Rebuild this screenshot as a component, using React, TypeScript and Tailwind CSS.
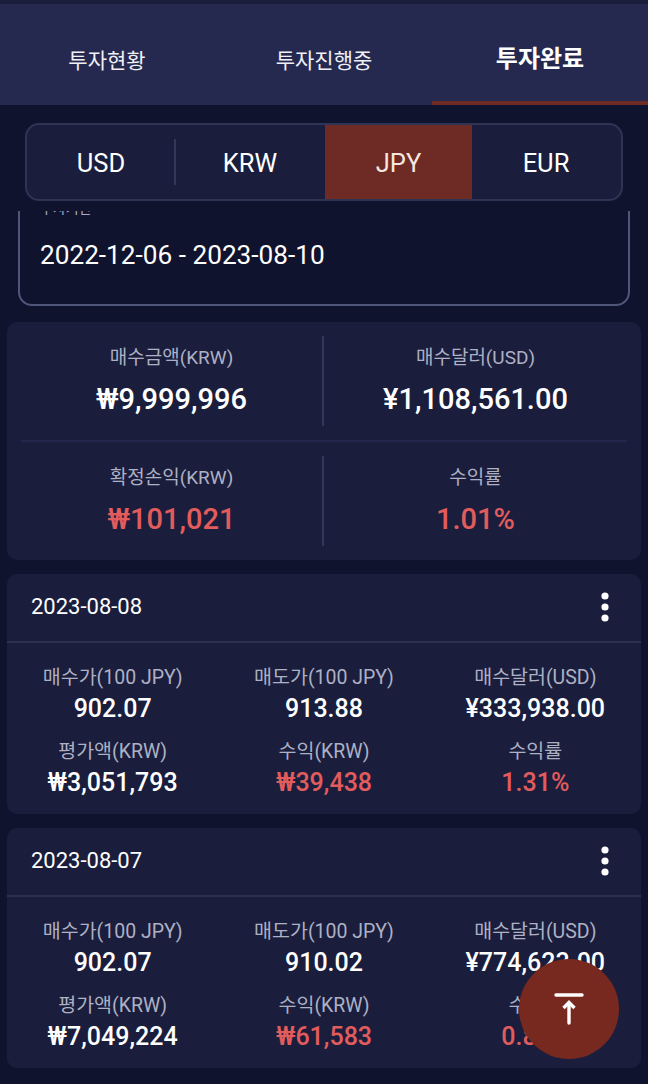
const Font = "font-['Roboto','Noto_Sans_CJK_KR',sans-serif]";

const Stat = ({ label, value, red }: { label: string; value: string; red?: boolean }) => (
  <div className="flex flex-col items-center pb-[1px]">
    <div className="text-[19px] leading-[26px] text-[#aeb0c4]">{label}</div>
    <div className={`mt-[11px] text-[29px] leading-[34px] font-medium ${red ? "text-[#e25c5c]" : "text-white"}`}>
      {value}
    </div>
  </div>
);

const Cell = ({ label, value, red }: { label: string; value: string; red?: boolean }) => (
  <div className="flex flex-col items-center">
    <div className="text-[19.5px] leading-[26px] text-[#aeb0c4]">{label}</div>
    <div className={`mt-[3px] text-[25px] leading-[30px] font-medium ${red ? "text-[#e25c5c]" : "text-white"}`}>
      {value}
    </div>
  </div>
);

const DealCard = ({ date, items }: { date: string; items: { label: string; value: string; red?: boolean }[] }) => (
  <section className="mx-[7px] h-[240px] rounded-[10px] bg-[#1a1e3c]">
    <div className="flex h-[69px] items-center justify-between border-b-2 border-[#2d3150] pb-[2px] pl-[24px] pr-[30px]">
      <span className="text-[22px] text-white">{date}</span>
      <svg width="12" height="30" viewBox="0 0 12 30" fill="white" aria-hidden="true">
        <circle cx="6" cy="4" r="3.6" />
        <circle cx="6" cy="15" r="3.6" />
        <circle cx="6" cy="26" r="3.6" />
      </svg>
    </div>
    <div className="grid grid-cols-3 gap-y-[15px] pt-[22px]">
      {items.map((item) => (
        <Cell key={item.label} {...item} />
      ))}
    </div>
  </section>
);

const currencies = ["USD", "KRW", "JPY", "EUR"];

export default function App() {
  return (
    <main className={`${Font} relative h-[1084px] w-[648px] overflow-hidden bg-[#10132e]`}>
      {/* Tabs */}
      <div className="h-[4px] bg-[#1a1d3a]" />
      <nav className="grid h-[101px] grid-cols-3 bg-[#26294f] text-white">
        <div className="flex items-center justify-center pr-[2px] pt-[15px] text-[21px] text-[#f0f0f5]">투자현황</div>
        <div className="flex items-center justify-center pt-[15px] text-[21px] text-[#f0f0f5]">투자진행중</div>
        <div className="flex items-center justify-center border-b-[4px] border-[#6e2a24] pt-[13px] text-[24px] font-bold">
          투자완료
        </div>
      </nav>

      {/* Currency filter */}
      <div className="mx-[25px] mt-[18px] grid h-[78px] grid-cols-[148px_150px_147px_148px] overflow-hidden rounded-[14px] border-2 border-[#2f3354] bg-[#1a1e3c]">
        {currencies.map((c, i) => (
          <div
            key={c}
            className={`relative flex items-center justify-center pt-[2px] text-[25.5px] ${
              c === "JPY" ? "bg-[#6e2a24] text-[#f6e6e0]" : "text-white"
            }`}
          >
            {c}
            {i === 0 && <span className="absolute -right-[1px] top-[14px] h-[46px] w-[2px] bg-[#33375a]" />}
          </div>
        ))}
      </div>

      {/* Date range, scrolled under the filter */}
      <div className="mt-[10px] h-[95px] overflow-hidden px-[18px]">
        <div className="-mt-[14px] h-[109px] rounded-[14px] border-2 border-[#50557a] px-[20px] pt-[2px]">
          <div className="text-[14px] leading-[14px] text-[#a7abc4]">투자기간</div>
          <div className="mt-[25px] text-[26.2px] leading-[30px] text-white">2022-12-06 - 2023-08-10</div>
        </div>
      </div>

      {/* Summary */}
      <section className="mx-[7px] mt-[16px] h-[238px] rounded-[10px] bg-[#1a1e3c] px-[14px]">
        <div className="grid h-[120px] grid-cols-2 items-center border-b-2 border-[#22264a]">
          <div className="flex h-[90px] items-center justify-center border-r-2 border-[#33375a]">
            <Stat label="매수금액(KRW)" value="₩9,999,996" />
          </div>
          <div className="flex h-[90px] items-center justify-center">
            <Stat label="매수달러(USD)" value="¥1,108,561.00" />
          </div>
        </div>
        <div className="grid h-[118px] grid-cols-2 items-center">
          <div className="flex h-[90px] items-center justify-center border-r-2 border-[#33375a]">
            <Stat label="확정손익(KRW)" value="₩101,021" red />
          </div>
          <div className="flex h-[90px] items-center justify-center">
            <Stat label="수익률" value="1.01%" red />
          </div>
        </div>
      </section>

      {/* Deals */}
      <div className="mt-[14px] flex flex-col gap-[14px]">
        <DealCard
          date="2023-08-08"
          items={[
            { label: "매수가(100 JPY)", value: "902.07" },
            { label: "매도가(100 JPY)", value: "913.88" },
            { label: "매수달러(USD)", value: "¥333,938.00" },
            { label: "평가액(KRW)", value: "₩3,051,793" },
            { label: "수익(KRW)", value: "₩39,438", red: true },
            { label: "수익률", value: "1.31%", red: true },
          ]}
        />
        <DealCard
          date="2023-08-07"
          items={[
            { label: "매수가(100 JPY)", value: "902.07" },
            { label: "매도가(100 JPY)", value: "910.02" },
            { label: "매수달러(USD)", value: "¥774,623.00" },
            { label: "평가액(KRW)", value: "₩7,049,224" },
            { label: "수익(KRW)", value: "₩61,583", red: true },
            { label: "수익률", value: "0.87%", red: true },
          ]}
        />
      </div>

      {/* Scroll to top */}
      <button className="absolute left-[519px] top-[959px] flex h-[100px] w-[100px] items-center justify-center rounded-full bg-[#77291f]">
        <svg width="30" height="34" viewBox="0 0 30 34" fill="none" stroke="white" strokeWidth="3.4" strokeLinecap="round" aria-hidden="true">
          <path d="M2 3h26" />
          <path d="M15 31V11" />
          <path d="M9.5 16 15 10.5 20.5 16" strokeLinecap="butt" />
        </svg>
      </button>
    </main>
  );
}
